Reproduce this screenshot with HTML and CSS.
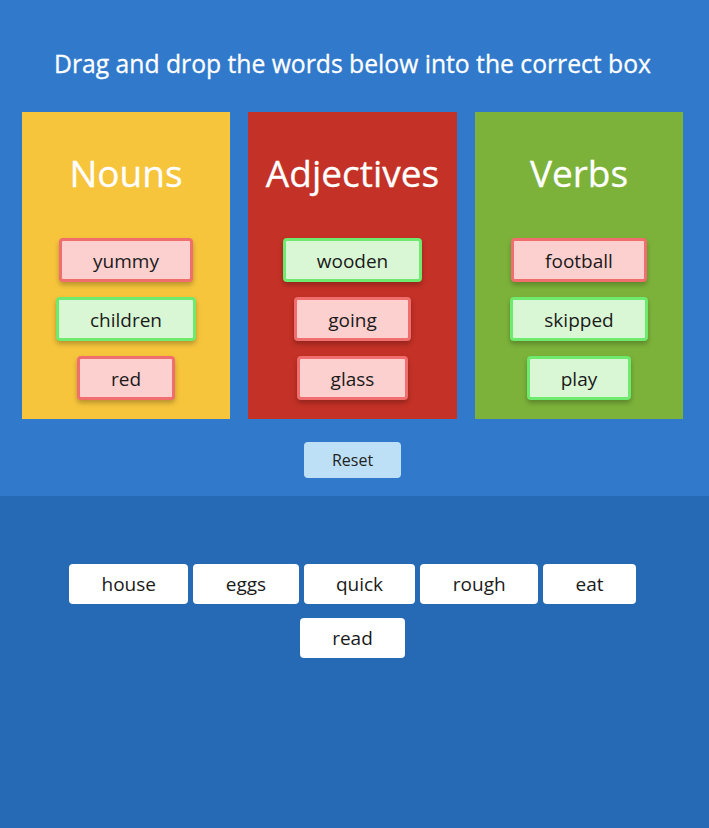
FILE: index.html
```html
<!DOCTYPE html>
<html>
<head>
<meta charset="utf-8">
<link rel="stylesheet" href="styles.css">
</head>
<body>
<div class="top">
  <h1 class="title">Drag and drop the words below into the correct box</h1>
  <div class="cards">
    <div class="card yellow">
      <h2 class="card-title">Nouns</h2>
      <div class="chips">
        <div class="chip wrong">yummy</div>
        <div class="chip right">children</div>
        <div class="chip wrong">red</div>
      </div>
    </div>
    <div class="card red">
      <h2 class="card-title">Adjectives</h2>
      <div class="chips">
        <div class="chip right">wooden</div>
        <div class="chip wrong">going</div>
        <div class="chip wrong">glass</div>
      </div>
    </div>
    <div class="card green">
      <h2 class="card-title">Verbs</h2>
      <div class="chips">
        <div class="chip wrong">football</div>
        <div class="chip right">skipped</div>
        <div class="chip right">play</div>
      </div>
    </div>
  </div>
  <div class="reset-row"><button class="reset">Reset</button></div>
</div>
<div class="bottom">
  <div class="pool">
    <div class="word">house</div>
    <div class="word">eggs</div>
    <div class="word">quick</div>
    <div class="word">rough</div>
    <div class="word">eat</div>
    <div class="word">read</div>
  </div>
</div>
</body>
</html>
```
FILE: styles.css
```css
* { box-sizing: border-box; }
html, body { margin: 0; padding: 0; height: 100%; }
body {
  font-family: "Open Sans", "Liberation Sans", sans-serif;
  background: #2669b4;
  display: flex;
  flex-direction: column;
}
.top {
  background: #3079cb;
  padding: 46px 26px 18px 22px;
}
.title {
  margin: 0;
  color: #fff;
  font-size: 24.7px;
  font-weight: 400;
  line-height: 36px;
  text-align: center;
  -webkit-text-stroke: 0.3px #fff;
}
.cards {
  margin-top: 30px;
  display: grid;
  grid-template-columns: 208px 209px 208px;
  gap: 18px;
}
.card {
  height: 307px;
  padding-top: 39px;
  display: flex;
  flex-direction: column;
  align-items: center;
}
.yellow { background: #f7c53c; }
.red { background: #c43126; }
.green { background: #7cb23a; }
.card-title {
  margin: 0;
  color: #fff;
  font-size: 37px;
  font-weight: 400;
  line-height: 44px;
  -webkit-text-stroke: 0.3px #fff;
}
.chips {
  margin-top: 43px;
  display: flex;
  flex-direction: column;
  align-items: center;
  gap: 15px;
}
.chip {
  height: 44px;
  padding: 0 31px;
  border: 3px solid;
  border-radius: 4px;
  font-size: 19px;
  line-height: 40px;
  color: #1a1a1a;
  box-shadow: 0 3px 5px rgba(0,0,0,0.25);
}
.wrong { background: #fdd0d0; border-color: #f06e6e; }
.right { background: #d9f7d5; border-color: #6eea6e; }
.reset-row {
  margin-top: 23px;
  display: flex;
  justify-content: center;
}
.reset {
  width: 97px;
  height: 36px;
  border: none;
  border-radius: 4px;
  background: #bde0f7;
  color: #222;
  font-family: "Open Sans", "Liberation Sans", sans-serif;
  font-size: 16px;
  padding: 0;
}
.bottom {
  flex: 1;
  background: #2669b4;
  padding-top: 68px;
}
.pool {
  display: flex;
  flex-wrap: wrap;
  justify-content: center;
  gap: 14px 5px;
  padding: 0 50px 0 46px;
}
.word {
  height: 40px;
  padding: 0 32.4px;
  background: #fff;
  border-radius: 4px;
  font-size: 19px;
  line-height: 40px;
  color: #1a1a1a;
}
```
